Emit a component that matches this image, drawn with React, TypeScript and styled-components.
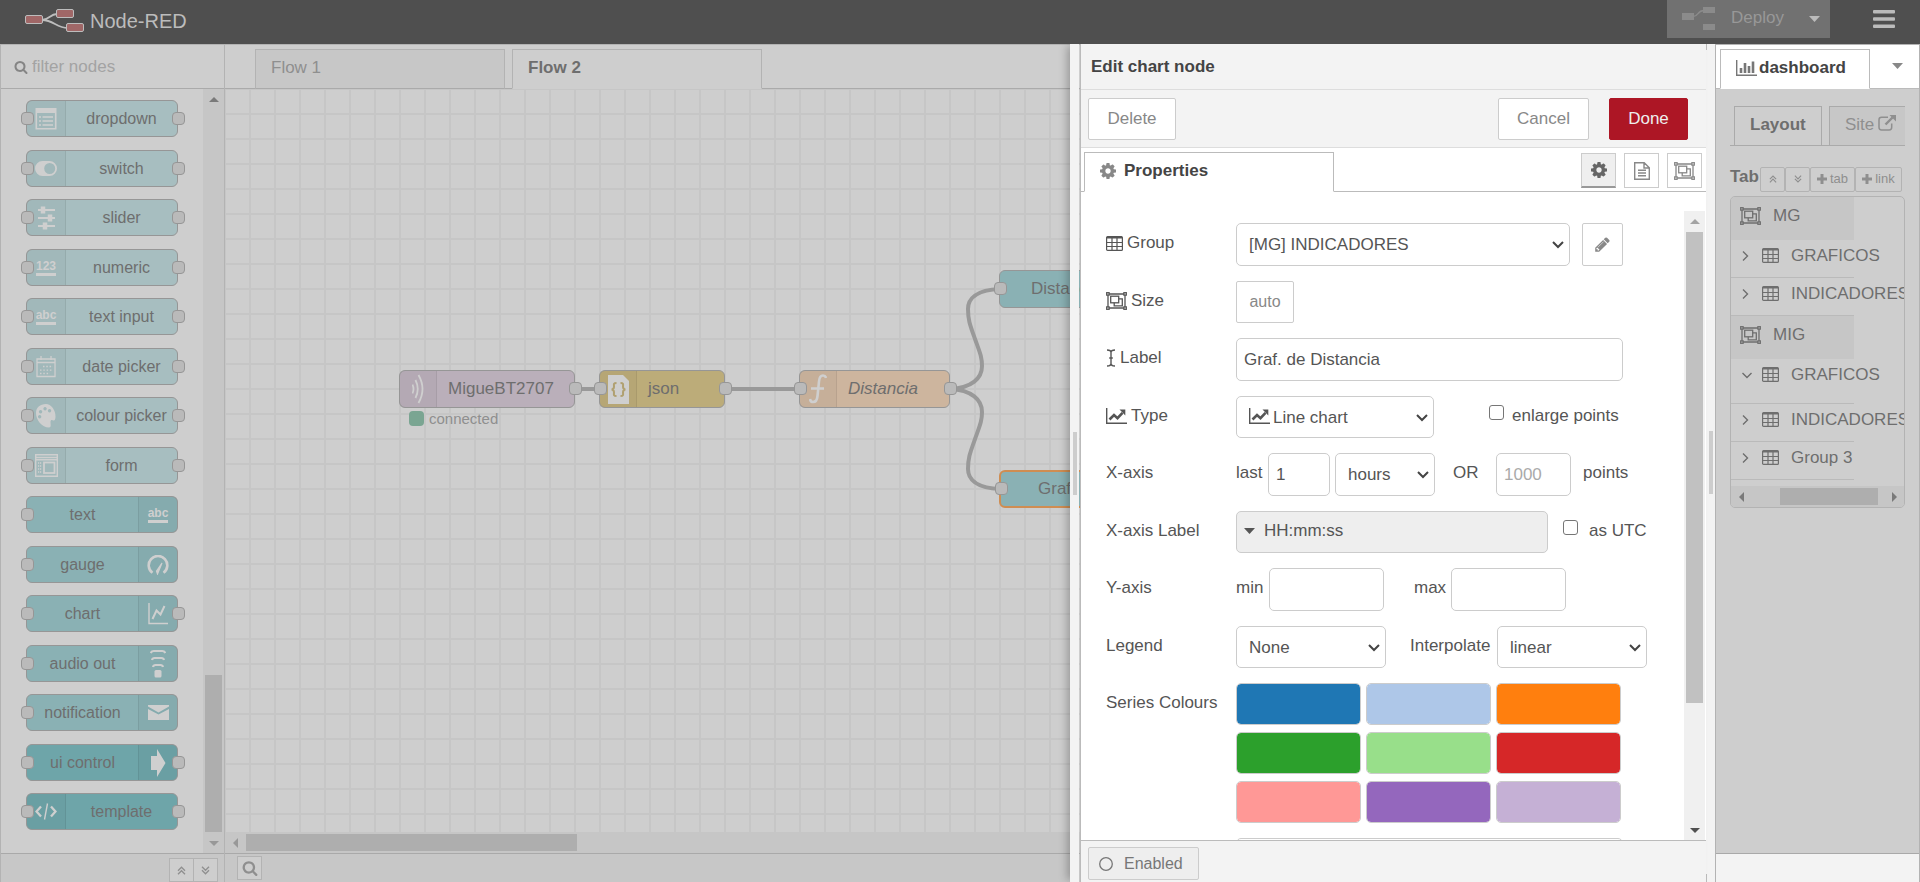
import React from "react";
import styled, { createGlobalStyle, css } from "styled-components";

const shade = {
  bg: "#cecece",
  track: "#c6c6c6",
  thumb: "#aeaeae",
  line: "#b3b3b3",
  text: "#6e6e6e",
  muted: "#8f8f8f",
};

const Global = createGlobalStyle`
  *, *::before, *::after { box-sizing: border-box; }
  body { margin: 0; overflow: hidden; }
  body, button, input, select {
    font-family: "Liberation Sans", Arial, Helvetica, sans-serif;
    font-size: 17px;
  }
  button { padding: 0; margin: 0; cursor: pointer; }
  svg { display: block; flex: none; }
`;

/* ---------- page frame ---------- */

const Page = styled.div`
  display: flex;
  flex-direction: column;
  height: 100vh;
  background: ${shade.bg};
  color: ${shade.text};
`;

const Header = styled.header`
  display: flex;
  align-items: flex-start;
  justify-content: space-between;
  height: 44px;
  flex: none;
  background: #4f4f4f;
  position: relative;
  z-index: 2;
`;

const Brand = styled.div`
  display: flex;
  align-items: center;
  gap: 6px;
  height: 42px;
  padding-left: 25px;
  font-size: 20px;
  color: #bcbcbc;
`;

const HeaderActions = styled.div`
  display: flex;
  gap: 18px;
`;

const DeployGroup = styled.div`
  display: flex;
  width: 163px;
  height: 38px;
  background: #717171;
`;

const DeployButton = styled.button`
  display: flex;
  align-items: center;
  gap: 16px;
  flex: 1;
  padding: 0 0 2px 15px;
  border: 0;
  background: none;
  color: #989898;
  line-height: 36px;
`;

const HeaderIconButton = styled.button<{ $w: number }>`
  display: flex;
  align-items: center;
  justify-content: center;
  width: ${(p) => p.$w}px;
  height: 38px;
  border: 0;
  background: none;
  color: #bbb;
`;

const Main = styled.main`
  display: flex;
  flex: 1;
  min-height: 0;
`;

const FooterBar = styled.footer<{ $bg?: string }>`
  display: flex;
  flex: none;
  height: 29px;
  border-top: 1px solid #a9a9a9;
  background: ${(p) => p.$bg ?? "#c7c7c7"};
`;

const FooterButton = styled.button`
  display: flex;
  align-items: center;
  justify-content: center;
  width: 25px;
  height: 24px;
  border: 1px solid ${shade.line};
  background: ${shade.bg};
  color: ${shade.muted};
  & + & {
    margin-left: -1px;
  }
`;

/* ---------- scrollbars ---------- */

const VTrack = styled.div<{ $light?: boolean }>`
  display: flex;
  flex-direction: column;
  align-items: center;
  flex: none;
  width: 21px;
  background: ${(p) => (p.$light ? "#f0f0f0" : shade.track)};
`;

const HTrack = styled.div`
  display: flex;
  align-items: center;
  flex: none;
  height: 21px;
  background: ${shade.track};
`;

const ArrowCell = styled.div`
  display: flex;
  align-items: center;
  justify-content: center;
  width: 21px;
  height: 21px;
  flex: none;
`;

const Spring = styled.div<{ $grow: number }>`
  flex: ${(p) => p.$grow} 1 0;
`;

const VThumb = styled.div<{ $grow: number; $light?: boolean }>`
  flex: ${(p) => p.$grow} 1 0;
  width: 17px;
  background: ${(p) => (p.$light ? "#c1c1c1" : shade.thumb)};
`;

const HThumb = styled.div<{ $grow: number }>`
  flex: ${(p) => p.$grow} 1 0;
  height: 17px;
  background: ${shade.thumb};
`;

/* ---------- palette ---------- */

const Palette = styled.aside`
  display: flex;
  flex-direction: column;
  flex: none;
  width: 225px;
  border: 1px solid ${shade.line};
  border-bottom: 0;
`;

const SearchBox = styled.label`
  display: flex;
  align-items: center;
  gap: 4px;
  flex: none;
  height: 44px;
  padding-left: 13px;
  border-bottom: 1px solid #aaa;
  color: #858585;
`;

const SearchInput = styled.input`
  width: 150px;
  padding: 0;
  border: 0;
  outline: 0;
  background: none;
  &::placeholder {
    color: #a3a3a3;
    opacity: 1;
  }
`;

const PaletteBody = styled.div`
  display: flex;
  flex: 1;
  min-height: 0;
`;

const PaletteList = styled.ul`
  flex: 1;
  margin: 0;
  padding: 11px 0 0 25px;
  list-style: none;
  overflow: hidden;
`;

const PaletteNode = styled.li<{ $bg: string; $flip?: boolean }>`
  position: relative;
  display: flex;
  flex-direction: ${(p) => (p.$flip ? "row-reverse" : "row")};
  width: 152px;
  height: 37px;
  margin-bottom: 12px;
  border: 1px solid #969696;
  border-radius: 6px;
  background: ${(p) => p.$bg};
  &:nth-child(odd) {
    margin-bottom: 13px;
  }
`;

const PaletteIcon = styled.span<{ $flip?: boolean }>`
  display: flex;
  align-items: center;
  justify-content: center;
  width: 39px;
  flex: none;
  background: rgba(0, 0, 0, 0.03);
  border-${(p) => (p.$flip ? "left" : "right")}: 1px solid rgba(0, 0, 0, 0.07);
  color: #cfcfcf;
`;

const PaletteLabel = styled.span`
  flex: 1;
  line-height: 35px;
  text-align: center;
  font-size: 16px;
  white-space: nowrap;
`;

const WordIcon = styled.span`
  border-bottom: 3px solid currentColor;
  font-size: 12px;
  font-weight: bold;
  line-height: 13px;
`;

const Port = styled.span<{ $side: "in" | "out" }>`
  position: absolute;
  top: 50%;
  width: 13px;
  height: 13px;
  margin-top: -7px;
  border: 1px solid #969696;
  border-radius: 4px;
  background: #bababa;
  ${(p) => (p.$side === "in" ? css`left: -6px;` : css`right: -8px;`)}
`;

/* ---------- workspace ---------- */

const Workspace = styled.section`
  position: relative;
  display: flex;
  flex-direction: column;
  flex: 1;
  min-width: 0;
  border-top: 1px solid ${shade.line};
`;

const FlowTabs = styled.nav`
  display: flex;
  gap: 7px;
  flex: none;
  height: 44px;
  padding: 4px 0 0 30px;
  border-bottom: 1px solid #aaa;
`;

const FlowTab = styled.button<{ $active?: boolean }>`
  width: 250px;
  height: 40px;
  padding: 0 0 2px 15px;
  border: 1px solid ${shade.line};
  border-bottom: ${(p) => (p.$active ? `1px solid ${shade.bg}` : "1px solid #aaa")};
  background: ${(p) => (p.$active ? shade.bg : "#c7c7c7")};
  color: ${(p) => (p.$active ? shade.text : shade.muted)};
  font-weight: ${(p) => (p.$active ? "bold" : "normal")};
  text-align: left;
`;

const Canvas = styled.div`
  position: relative;
  flex: 1;
  min-height: 0;
  overflow: hidden;
  background-color: ${shade.bg};
  background-image: linear-gradient(#c6c6c6 2px, transparent 2px),
    linear-gradient(90deg, #c6c6c6 2px, transparent 2px);
  background-size: 25px 25px;
  background-position: -1px -1px;
`;

const Wires = styled.svg`
  position: absolute;
  left: 0;
  top: 0;
`;

const FlowNode = styled.div<{ $x: number; $y: number; $w: number; $bg: string; $selected?: boolean }>`
  position: absolute;
  left: ${(p) => p.$x}px;
  top: ${(p) => p.$y}px;
  display: flex;
  width: ${(p) => p.$w}px;
  height: 38px;
  border: ${(p) => (p.$selected ? "2px solid #cf8d52" : "1px solid #969696")};
  border-radius: 6px;
  background: ${(p) => p.$bg};
  line-height: ${(p) => (p.$selected ? 34 : 36)}px;
`;

const FlowIcon = styled.span`
  display: flex;
  align-items: center;
  justify-content: center;
  width: 37px;
  background: rgba(0, 0, 0, 0.03);
  border-right: 1px solid rgba(0, 0, 0, 0.07);
  color: #cfcfcf;
`;

const FlowLabel = styled.span<{ $pad?: number; $italic?: boolean }>`
  padding-left: ${(p) => p.$pad ?? 11}px;
  font-style: ${(p) => (p.$italic ? "italic" : "normal")};
  white-space: nowrap;
`;

const NodeStatus = styled.div`
  position: absolute;
  left: 184px;
  top: 321px;
  display: flex;
  align-items: center;
  gap: 5px;
  font-size: 15px;
  line-height: 17px;
  color: ${shade.muted};
  &::before {
    content: "";
    width: 15px;
    height: 15px;
    border-radius: 4px;
    background: #7aa592;
  }
`;

/* ---------- edit tray ---------- */

const Tray = styled.div`
  position: absolute;
  top: -1px;
  right: 0;
  bottom: 0;
  display: flex;
  width: 636px;
  gap: 1px;
  box-shadow: -5px 0 8px -2px rgba(0, 0, 0, 0.25);
`;

const Grip = styled.div`
  display: flex;
  align-items: center;
  justify-content: center;
  width: 9px;
  flex: none;
  background: #f3f3f3;
  &::before {
    content: "";
    width: 4px;
    height: 63px;
    background: #cdcdcd;
  }
`;

const TrayPanel = styled.form`
  display: flex;
  flex-direction: column;
  flex: 1;
  min-width: 0;
  border-left: 1px solid #bbb;
  background: #fff;
  color: #555;
`;

const TrayTitle = styled.h2`
  flex: none;
  margin: 0;
  height: 46px;
  padding-left: 10px;
  border-bottom: 1px solid #ddd;
  background: #f3f3f3;
  color: #444;
  font-size: 17px;
  line-height: 45px;
`;

const TrayToolbar = styled.div`
  display: flex;
  align-items: center;
  gap: 20px;
  flex: none;
  height: 58px;
  padding: 0 18px 0 7px;
  border-bottom: 1px solid #ddd;
  background: #f3f3f3;
`;

const ToolButton = styled.button<{ $w: number; $primary?: boolean; $first?: boolean }>`
  width: ${(p) => p.$w}px;
  height: 42px;
  margin-right: ${(p) => (p.$first ? "auto" : 0)};
  border: 1px solid ${(p) => (p.$primary ? "#ad1625" : "#ccc")};
  border-radius: 2px;
  background: ${(p) => (p.$primary ? "#ad1625" : "#fff")};
  color: ${(p) => (p.$primary ? "#eee" : "#888")};
`;

const TrayTabs = styled.div`
  display: flex;
  align-items: flex-start;
  gap: 8px;
  flex: none;
  height: 44px;
  padding: 4px 4px 0 3px;
  border-bottom: 1px solid #bbb;
`;

const PropertiesTab = styled.button`
  display: flex;
  align-items: center;
  gap: 8px;
  width: 250px;
  height: 40px;
  margin-right: auto;
  padding: 0 0 2px 15px;
  border: 1px solid #bbb;
  border-bottom-color: #fff;
  background: #fff;
  color: #444;
  font-weight: bold;
  svg {
    color: #888;
  }
`;

const TabIconButton = styled.button<{ $active?: boolean }>`
  display: flex;
  align-items: center;
  justify-content: center;
  width: 35px;
  height: 35px;
  margin-top: 1px;
  border: 1px solid #ccc;
  background: #fff;
  color: #888;
  ${(p) =>
    p.$active &&
    css`
      border-bottom: 2px solid #999;
      background: #efefef;
      color: #666;
    `}
`;

const TrayBody = styled.div`
  display: flex;
  flex: 1;
  min-height: 0;
`;

const FormArea = styled.div`
  flex: 1;
  min-width: 0;
  padding: 31px 0 0 25px;
  overflow: hidden;
`;

const ScrollColumn = styled.div`
  display: flex;
  flex: none;
  padding: 19px 1px 0 0;
`;

const FormRow = styled.div`
  display: flex;
  align-items: flex-start;
  height: 43px;
  margin-bottom: 15px;
  &:nth-child(even) {
    height: 42px;
  }
`;

const FieldLabel = styled.label`
  display: flex;
  align-items: center;
  gap: 4px;
  width: 130px;
  flex: none;
  line-height: 40px;
  white-space: nowrap;
`;

const Inline = styled.label<{ $w: number; $lead?: number }>`
  width: ${(p) => p.$w}px;
  margin-left: ${(p) => p.$lead ?? 0}px;
  flex: none;
  line-height: 40px;
  white-space: nowrap;
`;

const TextInput = styled.input<{ $w: number }>`
  width: ${(p) => p.$w}px;
  height: 100%;
  padding: 0 7px;
  border: 1px solid #ccc;
  border-radius: 5px;
  background: #fff;
  color: #555;
  &::placeholder {
    color: #aaa;
    opacity: 1;
  }
`;

const SelectWrap = styled.span<{ $w: number; $lead?: number }>`
  position: relative;
  display: block;
  width: ${(p) => p.$w}px;
  height: 100%;
  margin-left: ${(p) => p.$lead ?? 0}px;
  flex: none;
`;

const SelectBox = styled.select<{ $icon?: boolean }>`
  width: 100%;
  height: 100%;
  padding: 0 24px 0 ${(p) => (p.$icon ? 36 : 12)}px;
  border: 1px solid #ccc;
  border-radius: 5px;
  appearance: none;
  background: #fff;
  color: #555;
`;

const SelectArrow = styled.svg`
  position: absolute;
  right: 6px;
  top: 18px;
  pointer-events: none;
`;

const SelectIcon = styled.span`
  position: absolute;
  left: 13px;
  top: 12px;
  pointer-events: none;
`;

const SmallButton = styled.button<{ $w: number; $lead?: number }>`
  display: flex;
  align-items: center;
  justify-content: center;
  width: ${(p) => p.$w}px;
  height: 100%;
  margin-left: ${(p) => p.$lead ?? 0}px;
  border: 1px solid #ccc;
  border-radius: 2px;
  background: #fff;
  color: #888;
  font-size: 16px;
`;

const FormatButton = styled.button`
  display: flex;
  align-items: center;
  gap: 9px;
  width: 312px;
  height: 100%;
  padding: 0 0 3px 7px;
  border: 1px solid #ccc;
  border-radius: 5px;
  background: #eee;
  color: #555;
`;

const Check = styled.input`
  appearance: none;
  width: 15px;
  height: 15px;
  margin: 9px 0 0;
  flex: none;
  border: 1px solid #767676;
  border-radius: 3px;
  background: #fff;
`;

const Swatches = styled.div`
  display: grid;
  grid-template-columns: repeat(3, 125px);
  gap: 7px 5px;
`;

const Swatch = styled.input`
  appearance: none;
  width: 100%;
  height: 42px;
  padding: 0;
  border: 1px solid #ccc;
  border-radius: 5px;
  overflow: hidden;
  background: none;
  &::-webkit-color-swatch-wrapper {
    padding: 0;
  }
  &::-webkit-color-swatch {
    border: 0;
    border-radius: 4px;
  }
`;

const SwatchRow = styled(FormRow)`
  height: auto;
`;

const TrayFooter = styled.div`
  display: flex;
  flex: none;
  height: 42px;
  padding: 6px 7px 0;
  border-top: 1px solid #bbb;
  background: #f3f3f3;
`;

const EnabledButton = styled.button`
  display: flex;
  align-items: center;
  gap: 11px;
  width: 111px;
  height: 33px;
  padding-left: 10px;
  border: 1px solid #ccc;
  border-radius: 2px;
  background: #eee;
  color: #777;
  font-size: 16px;
`;

/* ---------- sidebar ---------- */

const Separator = styled.div`
  display: flex;
  flex-direction: column;
  justify-content: space-between;
  align-items: flex-start;
  width: 9px;
  flex: none;
  background: #f3f3f3;
`;

const SeparatorTick = styled.span<{ $h: number }>`
  width: 1px;
  height: ${(p) => p.$h}px;
  background: #bbb;
`;

const SeparatorGrip = styled.span`
  align-self: center;
  width: 4px;
  height: 63px;
  background: #cdcdcd;
`;

const Sidebar = styled.aside`
  display: flex;
  flex-direction: column;
  width: 205px;
  flex: none;
  border: 1px solid ${shade.line};
  border-bottom: 0;
`;

const SidebarTabs = styled.div`
  display: flex;
  height: 44px;
  flex: none;
  padding: 4px 0 0 4px;
  border-bottom: 1px solid #bbb;
  background: #fff;
`;

const DashboardTab = styled.button`
  display: flex;
  align-items: center;
  gap: 2px;
  width: 150px;
  height: 40px;
  padding: 0 0 2px 15px;
  border: 1px solid #bbb;
  border-bottom-color: #fff;
  background: #fff;
  color: #444;
  font-weight: bold;
  svg {
    color: #777;
  }
`;

const TabMenuButton = styled.button`
  display: flex;
  align-items: center;
  justify-content: center;
  flex: 1;
  padding: 0 0 5px 6px;
  border: 0;
  background: none;
  color: #888;
`;

const SidebarBody = styled.div`
  flex: 1;
  min-height: 0;
  padding: 17px 14px 0;
`;

const InnerTabs = styled.div`
  display: flex;
  gap: 7px;
  height: 40px;
  padding-left: 4px;
  border-bottom: 1px solid #aaa;
  overflow: hidden;
`;

const InnerTab = styled.button<{ $w: number; $active?: boolean }>`
  display: flex;
  align-items: center;
  gap: 4px;
  width: ${(p) => p.$w}px;
  height: 40px;
  flex: none;
  padding: 0 0 2px 15px;
  border: 1px solid #aaa;
  border-bottom-color: ${(p) => (p.$active ? shade.bg : "#aaa")};
  background: ${(p) => (p.$active ? shade.bg : "#c7c7c7")};
  color: ${(p) => (p.$active ? shade.text : shade.muted)};
  font-weight: ${(p) => (p.$active ? "bold" : "normal")};
  svg {
    margin-bottom: 4px;
  }
`;

const TabTools = styled.div`
  display: flex;
  height: 25px;
  margin-top: 21px;
`;

const TabToolsTitle = styled.b`
  width: 30px;
  line-height: 20px;
`;

const MiniButton = styled.button<{ $w: number }>`
  display: flex;
  align-items: center;
  justify-content: center;
  gap: 3px;
  width: ${(p) => p.$w}px;
  height: 25px;
  padding-bottom: 2px;
  border: 1px solid ${shade.line};
  border-radius: 2px;
  background: none;
  color: ${shade.muted};
  font-size: 13px;
`;

const TreeBox = styled.div`
  margin-top: 4px;
  border: 1px solid ${shade.line};
  border-radius: 5px;
  overflow: hidden;
`;

const Tree = styled.ul`
  margin: 0 0 6px;
  padding: 0;
  width: 123px;
  list-style: none;
`;

const TabItem = styled.li`
  display: flex;
  align-items: center;
  gap: 12px;
  height: 43px;
  padding: 0 0 5px 9px;
  background: #c6c6c6;
`;

const GroupItem = styled.li<{ $tall?: boolean }>`
  display: flex;
  align-items: flex-start;
  height: ${(p) => (p.$tall ? 45 : 38)}px;
  padding-left: 11px;
  border-bottom: 1px solid #bababa;
  line-height: 32px;
  white-space: nowrap;
`;

const ChevronCell = styled.span`
  display: flex;
  align-items: center;
  width: 20px;
  height: 32px;
  flex: none;
`;

const TableCell = styled.span`
  display: flex;
  align-items: center;
  width: 29px;
  height: 30px;
  flex: none;
`;

/* ---------- icons ---------- */

const Triangle = ({ dir, color = "#7a7a7a" }: { dir: "up" | "down" | "left" | "right"; color?: string }) => {
  const d = {
    up: "M0 7 5 2 10 7z",
    down: "M0 3 5 8 10 3z",
    left: "M7 0 2 5 7 10z",
    right: "M3 0 8 5 3 10z",
  }[dir];
  return (
    <svg width="10" height="10" viewBox="0 0 10 10">
      <path d={d} fill={color} />
    </svg>
  );
};

const Caret = () => (
  <svg width="11" height="6" viewBox="0 0 11 6">
    <path d="M0 0h11L5.500 6z" fill="currentColor" />
  </svg>
);

const SearchIcon = ({ size }: { size: number }) => (
  <svg width={size} height={size} viewBox="0 0 1792 1792" fill="currentColor">
    <path d="M1216 832q0-185-131.500-316.500t-316.500-131.500-316.500 131.500-131.500 316.500 131.500 316.500 316.500 131.500 316.500-131.500 131.500-316.500zm512 832q0 52-38 90t-90 38q-54 0-90-38l-343-342q-179 124-399 124-143 0-273.500-55.500t-225-150-150-225-55.500-273.500 55.500-273.500 150-225 225-150 273.500-55.500 273.500 55.500 225 150 150 225 55.500 273.500q0 220-124 399l343 343q37 37 37 90z" />
  </svg>
);

const CogIcon = () => (
  <svg width="16" height="16" viewBox="128 128 1536 1536" fill="currentColor">
    <path d="M1152 896q0-106-75-181t-181-75-181 75-75 181 75 181 181 75 181-75 75-181zm512-109v222q0 12-8 23t-20 13l-185 28q-19 54-39 91 35 50 107 138 10 12 10 25t-9 23q-27 37-99 108t-94 71q-12 0-26-9l-138-108q-44 23-91 38-16 136-29 186-7 28-36 28h-222q-14 0-24.500-8.500t-11.500-21.500l-28-184q-49-16-90-37l-141 107q-10 9-25 9-14 0-25-11-126-114-165-168-7-10-7-23 0-12 8-23 15-21 51-66.500t54-70.500q-27-50-41-99l-183-27q-13-2-21-12.500t-8-23.500v-222q0-12 8-23t19-13l186-28q14-46 39-92-40-57-107-138-10-12-10-24 0-10 9-23 26-36 98.500-107.500t94.500-71.500q13 0 26 10l138 107q44-23 91-38 16-136 29-186 7-28 36-28h222q14 0 24.500 8.500t11.500 21.500l28 184q49 16 90 37l142-107q9-9 24-9 13 0 25 10 129 119 165 170 7 8 7 22 0 12-8 23-15 21-51 66.500t-54 70.500q26 50 41 98l183 28q13 2 21 12.500t8 23.500z" />
  </svg>
);

const PencilIcon = () => (
  <svg width="17" height="17" viewBox="0 0 1792 1792" fill="currentColor">
    <path d="M491 1536l91-91-235-235-91 91v107h128v128h107zm523-928q0-22-22-22-10 0-17 7l-542 542q-7 7-7 17 0 22 22 22 10 0 17-7l542-542q7-7 7-17zm-54-192l416 416-832 832h-416v-416zm683 96q0 53-37 90l-166 166-416-416 166-165q36-38 90-38 53 0 91 38l235 234q37 39 37 91z" />
  </svg>
);

const TableIcon = () => (
  <svg width="17" height="15" viewBox="0 0 17 15" fill="none" stroke="currentColor">
    <rect x="0.600" y="0.600" width="15.800" height="13.800" rx="1" strokeWidth="1.200" />
    <path d="M1 1.500h15" strokeWidth="2" />
    <path d="M1 6.500h15M1 10.500h15M6 2v12M11 2v12" strokeWidth="1.200" />
  </svg>
);

const GroupIcon = () => (
  <svg width="21" height="18" viewBox="0 0 21 18" fill="none" stroke="currentColor" strokeWidth="1.300">
    <path d="M3 2h15M3 16h15M2 3v12M19 3v12" />
    <rect x="0.700" y="0.700" width="2.400" height="2.400" />
    <rect x="17.900" y="0.700" width="2.400" height="2.400" />
    <rect x="0.700" y="14.900" width="2.400" height="2.400" />
    <rect x="17.900" y="14.900" width="2.400" height="2.400" />
    <rect x="4.700" y="4.200" width="8" height="6.600" />
    <path d="M12.700 6.800h3.600v7H8.200v-3" />
  </svg>
);

const CursorIcon = () => (
  <svg width="10" height="18" viewBox="0 0 10 18" fill="none" stroke="currentColor" strokeWidth="1.400">
    <path d="M1 1c3 0 4 .8 4 2.500v11C5 16.200 4 17 1 17M9 1C6 1 5 1.800 5 3.500M5 14.500c0 1.700 1 2.500 4 2.500M3.200 9h3.600" />
  </svg>
);

const LineChartIcon = () => (
  <svg width="21" height="16" viewBox="0 0 21 16" fill="none" stroke="currentColor">
    <path d="M.7 0v15.200H21" strokeWidth="1.400" />
    <path d="M3.500 11.500 8 7l3.500 3.200 5-5.400" strokeWidth="2.600" />
    <path d="M13.500 1.600H19.300V7.400z" fill="currentColor" stroke="none" />
  </svg>
);

const BarChartIcon = () => (
  <svg width="21" height="16" viewBox="0 0 21 16" fill="none" stroke="currentColor">
    <path d="M.7 0v15.200H21" strokeWidth="1.400" />
    <path d="M5 13V8M9 13V3M13 13V6M17 13V1.500" strokeWidth="2.600" />
  </svg>
);

const FileIcon = () => (
  <svg width="16" height="18" viewBox="0 0 16 18" fill="none" stroke="currentColor" strokeWidth="1.400">
    <path d="M.7.700h9.500l5.100 5v11.600H.7zM10 .7V6h5.300M4 8.200h8M4 11h8M4 13.800h8" />
  </svg>
);

const ExternalIcon = () => (
  <svg width="18" height="16" viewBox="0 0 18 16" fill="none" stroke="currentColor">
    <path d="M10 2.200H3.500Q1 2.200 1 4.700v7.600q0 2.700 2.500 2.700h7.700q2.500 0 2.500-2.700V8.500" strokeWidth="1.500" />
    <path d="m7.500 9.500 7-7" strokeWidth="2.400" />
    <path d="M11.500 0H18v6.500z" fill="currentColor" stroke="none" />
  </svg>
);

const DoubleChevron = ({ down, size = 9 }: { down?: boolean; size?: number }) => (
  <svg width={size} height={size} viewBox="0 0 9 9" fill="none" stroke="currentColor" strokeWidth="1.300">
    <path d={down ? "M1 .8 4.500 4.300 8 .8M1 4.300l3.500 3.500L8 4.300" : "M1 4.700l3.500-3.500L8 4.700M1 8.200l3.500-3.500L8 8.200"} />
  </svg>
);

const PlusIcon = () => (
  <svg width="10" height="10" viewBox="0 0 10 10" stroke="currentColor" strokeWidth="3">
    <path d="M5 0v10M0 5h10" />
  </svg>
);

const Chevron = ({ open }: { open?: boolean }) => (
  <svg width="10" height="10" viewBox="0 0 10 10" fill="none" stroke="currentColor" strokeWidth="1.400">
    <path d={open ? "M.5 3 5 7.500 9.500 3" : "M1 .5 5.500 5 1 9.500"} />
  </svg>
);

const Logo = () => (
  <svg width="59" height="24" viewBox="0 0 59 24" fill="none" stroke="#bdbdbd">
    <path d="M17 11c7 0 8-6 15-6M17 11c12 0 14 8 26 8" strokeWidth="1.800" />
    <g fill="#a06767" strokeWidth="1">
      <rect x="0.500" y="6.500" width="17" height="8" rx="1.500" />
      <rect x="31.500" y="0.500" width="17" height="8" rx="1.500" />
      <rect x="41.500" y="14.500" width="17" height="8" rx="1.500" />
    </g>
  </svg>
);

const DeployIcon = () => (
  <svg width="33" height="23" viewBox="0 0 33 23" fill="#8b8b8b">
    <path d="M0 6h12v7H0zM21 0h12v6H21zM21 17h12v6H21z" />
    <path d="M11 9.500c6 0 4-6 11-6" fill="none" stroke="#8b8b8b" strokeWidth="1.500" />
  </svg>
);

const icons: Record<string, React.ReactNode> = {
  dropdown: (
    <svg width="22" height="22" viewBox="0 0 22 22">
      <path d="M.5 0h21v5H.5z" fill="currentColor" />
      <path d="M1.300 5v15.700h19.400V5" fill="none" stroke="currentColor" strokeWidth="1.600" />
      <path d="M4 9h2M7.500 9H18M4 13h2M7.500 13H18M4 17h2M7.500 17H18" stroke="currentColor" strokeWidth="1.500" />
    </svg>
  ),
  toggle: (
    <svg width="22" height="15" viewBox="0 0 22 15">
      <path d="M7.500 0a7.500 7.500 0 0 0 0 15h7a7.500 7.500 0 0 0 0-15zM14.700 2a5.500 5.500 0 1 1 0 11 5.500 5.500 0 0 1 0-11z" fill="currentColor" fillRule="evenodd" />
    </svg>
  ),
  slider: (
    <svg width="17" height="24" viewBox="0 0 17 24" stroke="currentColor">
      <path d="M0 4h17M0 12h17M0 20h17" strokeWidth="2" />
      <path d="M5 .5v7M12 8.500v7M7 16.500v7" strokeWidth="4.500" />
    </svg>
  ),
  num: <WordIcon>123</WordIcon>,
  abc: <WordIcon>abc</WordIcon>,
  calendar: (
    <svg width="20" height="22" viewBox="0 0 20 22" fill="none" stroke="currentColor" strokeWidth="1.300">
      <path d="M1 3h18v17.500H1zM1 6.500h18M5 0v4M15 0v4" />
      <path d="M7 10.500h10M4 14.200h13M4 17.500h10" strokeDasharray="1.500 1.800" />
    </svg>
  ),
  palette: (
    <svg width="20" height="24" viewBox="0 0 20 24" fill="currentColor">
      <path fillRule="evenodd" d="M10 0c5 0 9.500 6 9.500 12.500 0 3-1 4.500-2 4-1.500-1-3-1-3 1.500 0 2 1 5.500-1.500 5.500C6 23.500 0 16 0 9 0 3.500 4 0 10 0zM9 3a1.700 1.700 0 1 0 .1 0zM4.500 6a1.700 1.700 0 1 0 .1 0zM13.500 5a1.700 1.700 0 1 0 .1 0zM3.600 11a1.700 1.700 0 1 0 .1 0z" />
    </svg>
  ),
  form: (
    <svg width="23" height="23" viewBox="0 0 23 23" fill="none" stroke="currentColor" strokeWidth="1.400">
      <path d="M.7.700h21.600v21.600H.7zM.7 3.500h21.600M.7 5.800h21.600" />
      <rect x="9" y="8.500" width="10.500" height="10.500" strokeWidth="1.800" />
      <path d="M3 9h4M3 12h4M3 15h4M3 18h4" strokeDasharray="1.200 .8" />
    </svg>
  ),
  gauge: (
    <svg width="22" height="20" viewBox="0 0 22 20" fill="none" stroke="currentColor">
      <path d="M5.500 17.800A9.300 9.300 0 1 1 16.500 17.800" strokeWidth="2.600" />
      <path d="m15 8-4.500 11-1-3z" fill="currentColor" strokeWidth="1.200" />
    </svg>
  ),
  chart: (
    <svg width="20" height="22" viewBox="0 0 20 22" fill="none" stroke="currentColor">
      <path d="M1 0v20.500h19" strokeWidth="1.400" />
      <path d="m4.500 16 4-8.500 4 4 4-8.500" strokeWidth="2" />
    </svg>
  ),
  audio: (
    <svg width="16" height="29" viewBox="0 0 16 29" fill="none" stroke="currentColor" strokeWidth="2.200">
      <path d="M.8 4q.8-2 3-2h8.400q2.200 0 3 2M2 11q.5-2 2.500-2h7q2 0 2.500 2M3 18q.5-2 2.500-2h5q2 0 2.500 2" />
      <rect x="4.500" y="21" width="7" height="7.500" rx="1.500" fill="currentColor" stroke="none" />
    </svg>
  ),
  mail: (
    <svg width="21" height="15" viewBox="0 0 21 15" fill="currentColor">
      <path d="M0 0h21v1.500L10.500 7.500 0 1.500zM0 4l10.500 5.500L21 4v11H0z" />
    </svg>
  ),
  arrow: (
    <svg width="15" height="28" viewBox="0 0 15 28" fill="currentColor">
      <path d="M0 7h6V0l8.500 14L6 28v-7H0z" />
    </svg>
  ),
  code: (
    <svg width="22" height="17" viewBox="0 0 22 17" fill="none" stroke="currentColor">
      <path d="M6 3.500 1.500 8.500 6 13.500M16 3.500l4.500 5-4.500 5" strokeWidth="2.300" />
      <path d="M12.500.5l-3 16" strokeWidth="1.400" />
    </svg>
  ),
};

/* ---------- data ---------- */

const LIGHT = "#a7bec0";
const MID = "#8ab1b4";
const DARK = "#6ea5a9";

type PaletteEntry = { label: string; icon: string; bg: string; flip?: boolean; out?: boolean };

const paletteNodes: PaletteEntry[] = [
  { label: "dropdown", icon: "dropdown", bg: LIGHT, out: true },
  { label: "switch", icon: "toggle", bg: LIGHT, out: true },
  { label: "slider", icon: "slider", bg: LIGHT, out: true },
  { label: "numeric", icon: "num", bg: LIGHT, out: true },
  { label: "text input", icon: "abc", bg: LIGHT, out: true },
  { label: "date picker", icon: "calendar", bg: LIGHT, out: true },
  { label: "colour picker", icon: "palette", bg: LIGHT, out: true },
  { label: "form", icon: "form", bg: LIGHT, out: true },
  { label: "text", icon: "abc", bg: MID, flip: true },
  { label: "gauge", icon: "gauge", bg: MID, flip: true },
  { label: "chart", icon: "chart", bg: MID, flip: true, out: true },
  { label: "audio out", icon: "audio", bg: MID, flip: true },
  { label: "notification", icon: "mail", bg: MID, flip: true },
  { label: "ui control", icon: "arrow", bg: DARK, flip: true, out: true },
  { label: "template", icon: "code", bg: DARK, out: true },
];

const seriesColours = [
  "#1f77b4", "#aec7e8", "#ff7f0e",
  "#2ca02c", "#98df8a", "#d62728",
  "#ff9896", "#9467bd", "#c5b0d5",
];

type TreeEntry = { kind: "tab" | "group"; label: string; open?: boolean };

const tree: TreeEntry[] = [
  { kind: "tab", label: "MG" },
  { kind: "group", label: "GRAFICOS" },
  { kind: "group", label: "INDICADORES" },
  { kind: "tab", label: "MIG" },
  { kind: "group", label: "GRAFICOS", open: true },
  { kind: "group", label: "INDICADORES" },
  { kind: "group", label: "Group 3" },
];

/* ---------- parts ---------- */

type SelectProps = { id: string; value: string; w: number; lead?: number; icon?: React.ReactNode; name?: string };

const Select = ({ id, value, w, lead, icon, name }: SelectProps) => (
  <SelectWrap $w={w} $lead={lead}>
    <SelectBox id={id} $icon={!!icon} aria-label={name} defaultValue={value}>
      <option>{value}</option>
    </SelectBox>
    {icon && <SelectIcon>{icon}</SelectIcon>}
    <SelectArrow width="12" height="8" viewBox="0 0 12 8" fill="none" stroke="#444" strokeWidth="2">
      <path d="M1 1l5 5 5-5" />
    </SelectArrow>
  </SelectWrap>
);

const PaletteFooter = styled(FooterBar)`
  justify-content: flex-end;
  padding: 4px 6px 0 0;
`;

const WorkspaceFooter = styled(FooterBar)`
  padding: 2px 0 0 12px;
`;

const PalettePanel = () => (
  <Palette>
    <SearchBox>
      <SearchIcon size={14} />
      <SearchInput type="text" placeholder="filter nodes" aria-label="filter nodes" />
    </SearchBox>
    <PaletteBody>
      <PaletteList>
        {paletteNodes.map((n) => (
          <PaletteNode key={n.label} $bg={n.bg} $flip={n.flip}>
            <PaletteIcon $flip={n.flip}>{icons[n.icon]}</PaletteIcon>
            <PaletteLabel>{n.label}</PaletteLabel>
            <Port $side="in" />
            {n.out && <Port $side="out" />}
          </PaletteNode>
        ))}
      </PaletteList>
      <VTrack>
        <ArrowCell><Triangle dir="up" /></ArrowCell>
        <Spring $grow={566} />
        <VThumb $grow={157} />
        <ArrowCell><Triangle dir="down" color="#989898" /></ArrowCell>
      </VTrack>
    </PaletteBody>
    <PaletteFooter>
      <FooterButton type="button" aria-label="Collapse all"><DoubleChevron /></FooterButton>
      <FooterButton type="button" aria-label="Expand all"><DoubleChevron down /></FooterButton>
    </PaletteFooter>
  </Palette>
);

const Diagram = () => (
  <Canvas>
    <Wires width="900" height="500" viewBox="0 0 900 500" fill="none" stroke="#999" strokeWidth="4">
      <path d="M350 300h25M500 300h75" />
      <path d="M725 300C747 299 757 289 757 277C757 268 755 264 750 250C745 236 743 231 743 220C743 210 751 201 775 200" />
      <path d="M725 300C747 301 757 311 757 323C757 332 755 336 750 350C745 364 743 369 743 380C743 390 751 399 775 400" />
    </Wires>
    <FlowNode $x={174} $y={281} $w={176} $bg="#baafba">
      <FlowIcon>
        <svg width="12" height="30" viewBox="0 0 12 30" fill="none" stroke="currentColor" strokeWidth="1.800">
          <path d="M.5 10.500q2 4.500 0 9M3.500 6q4.500 9 0 18M6.500 1q8 14 0 28" />
        </svg>
      </FlowIcon>
      <FlowLabel>MigueBT2707</FlowLabel>
      <Port $side="out" />
    </FlowNode>
    <NodeStatus>connected</NodeStatus>
    <FlowNode $x={374} $y={281} $w={126} $bg="#bcac79">
      <FlowIcon>
        <svg width="21" height="29" viewBox="0 0 21 29">
          <path d="M0 0h15l6 6v23H0z" fill="currentColor" />
          <path d="M8.500 8C5 8 6 10 6 11.500S5.500 14.500 3.500 14.500C5.500 14.500 6 16 6 17.500S5 21 8.500 21M12.500 8C16 8 15 10 15 11.500s.5 3 2.500 3C15.500 14.500 15 16 15 17.500s1 3.500-2.500 3.500" fill="none" stroke="#b0a070" strokeWidth="2" />
        </svg>
      </FlowIcon>
      <FlowLabel>json</FlowLabel>
      <Port $side="in" />
      <Port $side="out" />
    </FlowNode>
    <FlowNode $x={574} $y={281} $w={151} $bg="#cdb59e">
      <FlowIcon>
        <svg width="18" height="30" viewBox="0 0 18 30" fill="none" stroke="currentColor" strokeWidth="2.600">
          <path d="M17 4q-.5-2.500-3-2.500-3.500 0-4 6L8.500 22q-.5 6-4.500 6-2.500 0-3-3M2 14.500h13" />
        </svg>
      </FlowIcon>
      <FlowLabel $italic>Distancia</FlowLabel>
      <Port $side="in" />
      <Port $side="out" />
    </FlowNode>
    <FlowNode $x={774} $y={181} $w={151} $bg={MID}>
      <FlowLabel $pad={31}>Distancia</FlowLabel>
      <Port $side="in" />
    </FlowNode>
    <FlowNode $x={774} $y={381} $w={201} $bg={MID} $selected>
      <FlowLabel $pad={37}>Graf. de Distancia</FlowLabel>
      <Port $side="in" />
    </FlowNode>
  </Canvas>
);

const EditTray = () => (
  <Tray>
    <Grip />
    <TrayPanel onSubmit={(e) => e.preventDefault()}>
      <TrayTitle>Edit chart node</TrayTitle>
      <TrayToolbar>
        <ToolButton type="button" $w={88} $first>Delete</ToolButton>
        <ToolButton type="button" $w={91}>Cancel</ToolButton>
        <ToolButton type="submit" $w={79} $primary>Done</ToolButton>
      </TrayToolbar>
      <TrayTabs>
        <PropertiesTab type="button"><CogIcon />Properties</PropertiesTab>
        <TabIconButton type="button" $active aria-label="Properties"><CogIcon /></TabIconButton>
        <TabIconButton type="button" aria-label="Description"><FileIcon /></TabIconButton>
        <TabIconButton type="button" aria-label="Appearance"><GroupIcon /></TabIconButton>
      </TrayTabs>
      <TrayBody>
        <FormArea>
          <FormRow>
            <FieldLabel htmlFor="group"><TableIcon />Group</FieldLabel>
            <Select id="group" value="[MG] INDICADORES" w={334} />
            <SmallButton type="button" $w={41} $lead={12} aria-label="Edit group"><PencilIcon /></SmallButton>
          </FormRow>
          <FormRow>
            <FieldLabel htmlFor="size"><GroupIcon />Size</FieldLabel>
            <SmallButton type="button" id="size" $w={58}>auto</SmallButton>
          </FormRow>
          <FormRow>
            <FieldLabel htmlFor="label"><CursorIcon />Label</FieldLabel>
            <TextInput id="label" type="text" defaultValue="Graf. de Distancia" $w={387} />
          </FormRow>
          <FormRow>
            <FieldLabel htmlFor="type"><LineChartIcon />Type</FieldLabel>
            <Select id="type" value="Line chart" w={198} icon={<LineChartIcon />} />
            <Inline as="span" $w={55} />
            <Check id="enlarge" type="checkbox" />
            <Inline htmlFor="enlarge" $w={120} $lead={8}>enlarge points</Inline>
          </FormRow>
          <FormRow>
            <FieldLabel htmlFor="last">X-axis</FieldLabel>
            <Inline htmlFor="last" $w={32}>last</Inline>
            <TextInput id="last" type="text" defaultValue="1" $w={62} />
            <Select id="unit" name="Time unit" value="hours" w={100} lead={5} />
            <Inline as="span" $w={43} $lead={18}>OR</Inline>
            <TextInput id="points" type="text" placeholder="1000" $w={75} />
            <Inline htmlFor="points" $w={60} $lead={12}>points</Inline>
          </FormRow>
          <FormRow>
            <FieldLabel htmlFor="format">X-axis Label</FieldLabel>
            <FormatButton type="button" id="format"><Caret />HH:mm:ss</FormatButton>
            <Inline as="span" $w={15} />
            <Check id="utc" type="checkbox" />
            <Inline htmlFor="utc" $w={70} $lead={11}>as UTC</Inline>
          </FormRow>
          <FormRow>
            <FieldLabel htmlFor="ymin">Y-axis</FieldLabel>
            <Inline htmlFor="ymin" $w={33}>min</Inline>
            <TextInput id="ymin" type="text" $w={115} />
            <Inline htmlFor="ymax" $w={37} $lead={30}>max</Inline>
            <TextInput id="ymax" type="text" $w={115} />
          </FormRow>
          <FormRow>
            <FieldLabel htmlFor="legend">Legend</FieldLabel>
            <Select id="legend" value="None" w={150} />
            <Inline htmlFor="interpolate" $w={87} $lead={24}>Interpolate</Inline>
            <Select id="interpolate" value="linear" w={150} />
          </FormRow>
          <SwatchRow>
            <FieldLabel as="span">Series Colours</FieldLabel>
            <Swatches>
              {seriesColours.map((c, i) => (
                <Swatch key={c} type="color" defaultValue={c} aria-label={`Series colour ${i + 1}`} />
              ))}
            </Swatches>
          </SwatchRow>
          <FormRow>
            <FieldLabel as="span" />
            <TextInput type="text" aria-label="Blank label" $w={387} />
          </FormRow>
        </FormArea>
        <ScrollColumn>
          <VTrack $light>
            <ArrowCell><Triangle dir="up" color="#a3a3a3" /></ArrowCell>
            <VThumb $grow={471} $light />
            <Spring $grow={116} />
            <ArrowCell><Triangle dir="down" color="#505050" /></ArrowCell>
          </VTrack>
        </ScrollColumn>
      </TrayBody>
      <TrayFooter>
        <EnabledButton type="button">
          <svg width="14" height="14" viewBox="0 0 14 14" fill="none" stroke="currentColor" strokeWidth="1.300">
            <circle cx="7" cy="7" r="6.300" />
          </svg>
          Enabled
        </EnabledButton>
      </TrayFooter>
    </TrayPanel>
  </Tray>
);

const DashboardSidebar = () => (
  <Sidebar>
    <SidebarTabs>
      <DashboardTab type="button"><BarChartIcon />dashboard</DashboardTab>
      <TabMenuButton type="button" aria-label="More tabs"><Caret /></TabMenuButton>
    </SidebarTabs>
    <SidebarBody>
      <InnerTabs>
        <InnerTab type="button" $w={88} $active>Layout</InnerTab>
        <InnerTab type="button" $w={88}>Site<ExternalIcon /></InnerTab>
      </InnerTabs>
      <TabTools>
        <TabToolsTitle>Tab</TabToolsTitle>
        <MiniButton type="button" $w={25} aria-label="Collapse all"><DoubleChevron size={8} /></MiniButton>
        <MiniButton type="button" $w={25} aria-label="Expand all"><DoubleChevron down size={8} /></MiniButton>
        <MiniButton type="button" $w={45}><PlusIcon />tab</MiniButton>
        <MiniButton type="button" $w={47}><PlusIcon />link</MiniButton>
      </TabTools>
      <TreeBox>
        <Tree>
          {tree.map((t, i) =>
            t.kind === "tab" ? (
              <TabItem key={i}><GroupIcon />{t.label}</TabItem>
            ) : (
              <GroupItem key={i} $tall={t.open}>
                <ChevronCell><Chevron open={t.open} /></ChevronCell>
                <TableCell><TableIcon /></TableCell>
                {t.label}
              </GroupItem>
            )
          )}
        </Tree>
        <HTrack>
          <ArrowCell><Triangle dir="left" /></ArrowCell>
          <Spring $grow={28} />
          <HThumb $grow={98} />
          <Spring $grow={5} />
          <ArrowCell><Triangle dir="right" /></ArrowCell>
        </HTrack>
      </TreeBox>
    </SidebarBody>
    <FooterBar $bg="#f3f3f3" />
  </Sidebar>
);

export default function App() {
  return (
    <Page>
      <Global />
      <Header>
        <Brand><Logo />Node-RED</Brand>
        <HeaderActions>
          <DeployGroup>
            <DeployButton type="button"><DeployIcon />Deploy</DeployButton>
            <HeaderIconButton type="button" $w={31} aria-label="Deploy options"><Caret /></HeaderIconButton>
          </DeployGroup>
          <HeaderIconButton type="button" $w={72} aria-label="Menu">
            <svg width="22" height="18" viewBox="0 0 22 18" fill="currentColor">
              <rect width="22" height="3.500" rx="1" />
              <rect y="7.200" width="22" height="3.500" rx="1" />
              <rect y="14.500" width="22" height="3.500" rx="1" />
            </svg>
          </HeaderIconButton>
        </HeaderActions>
      </Header>
      <Main>
        <PalettePanel />
        <Workspace>
          <FlowTabs>
            <FlowTab type="button">Flow 1</FlowTab>
            <FlowTab type="button" $active>Flow 2</FlowTab>
          </FlowTabs>
          <Diagram />
          <HTrack>
            <ArrowCell><Triangle dir="left" color="#989898" /></ArrowCell>
            <HThumb $grow={331} />
            <Spring $grow={1108} />
            <ArrowCell><Triangle dir="right" color="#989898" /></ArrowCell>
          </HTrack>
          <WorkspaceFooter>
            <FooterButton type="button" aria-label="Search flows"><SearchIcon size={16} /></FooterButton>
          </WorkspaceFooter>
          <EditTray />
        </Workspace>
        <Separator>
          <SeparatorTick $h={6} />
          <SeparatorGrip />
          <SeparatorTick $h={8} />
        </Separator>
        <DashboardSidebar />
      </Main>
    </Page>
  );
}
